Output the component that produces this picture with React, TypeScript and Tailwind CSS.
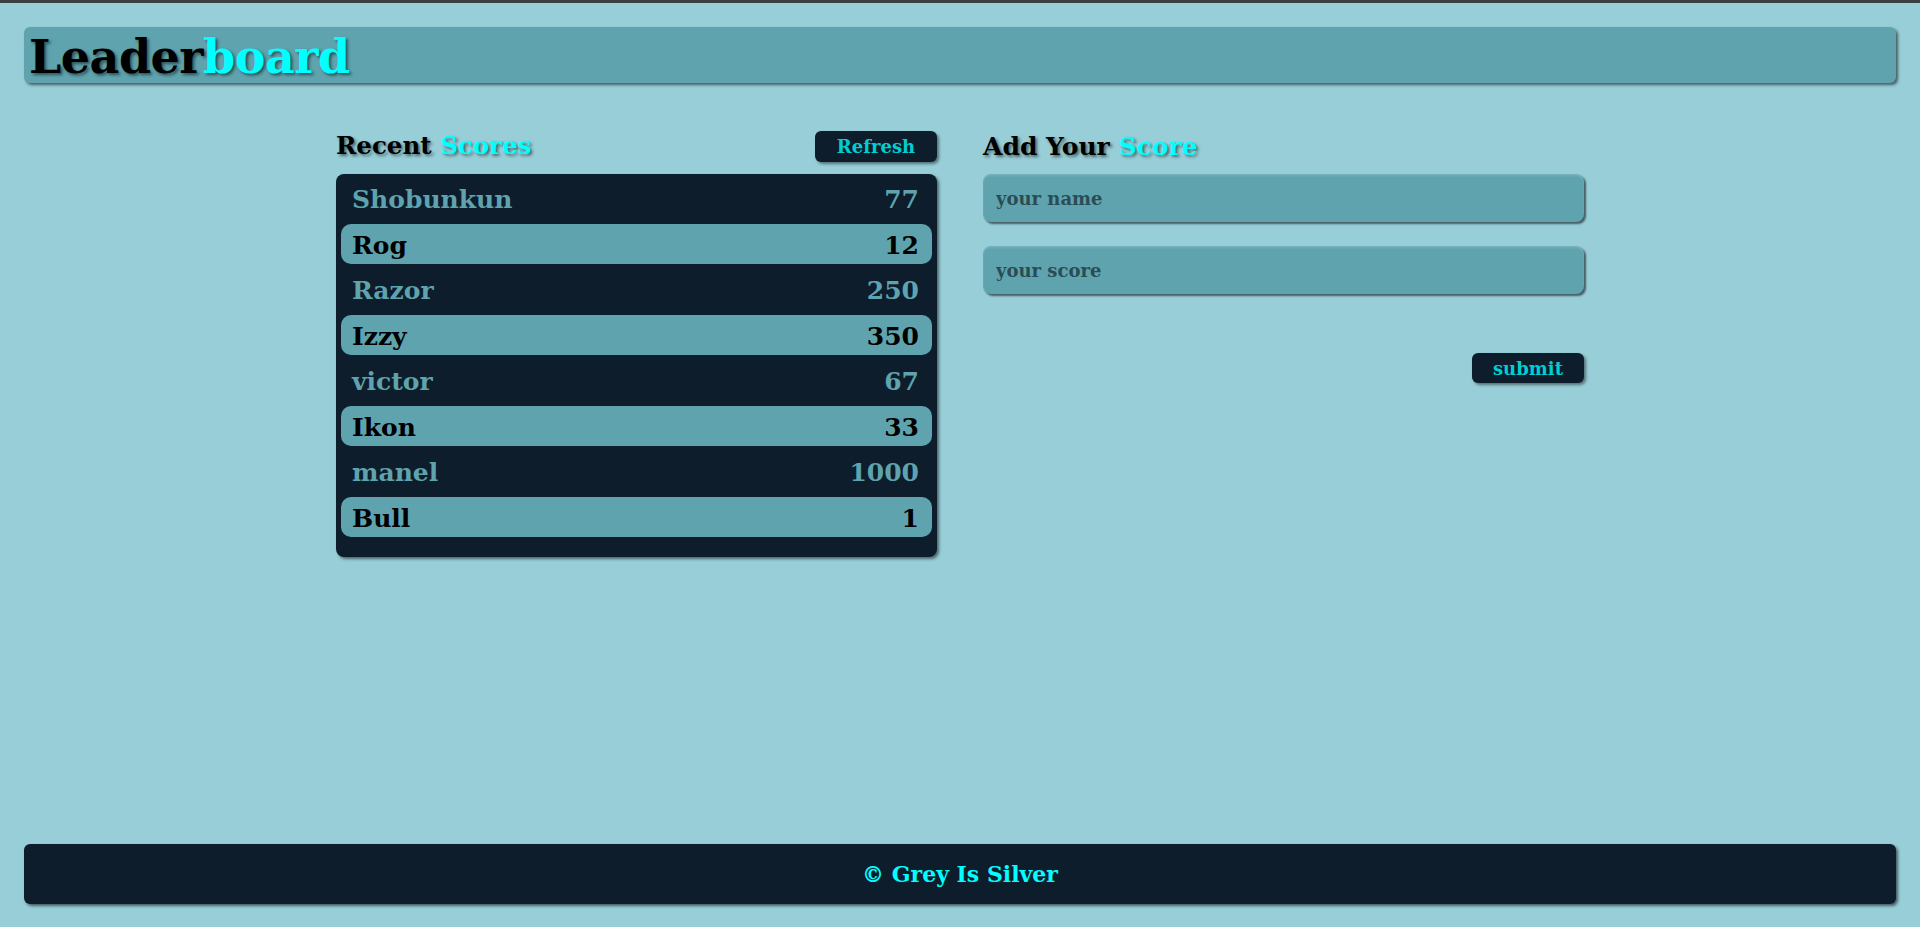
import React from 'react';

const scores = [
  { name: 'Shobunkun', score: 77 },
  { name: 'Rog', score: 12 },
  { name: 'Razor', score: 250 },
  { name: 'Izzy', score: 350 },
  { name: 'victor', score: 67 },
  { name: 'Ikon', score: 33 },
  { name: 'manel', score: 1000 },
  { name: 'Bull', score: 1 },
];

const serif = "font-['Georgia','DejaVu_Serif',serif]";

export default function App() {
  return (
    <div className={`min-h-screen flex flex-col bg-[#97ced8] border-t-[3px] border-[#3c3f41] ${serif}`}>
      <header className="mx-6 mt-6 h-14 flex items-center pt-1 px-[5px] rounded-md bg-[#5ea3ae] shadow-[2px_2px_3px_rgba(0,0,0,0.55)]">
        <h1 className="text-[46px] font-bold leading-none tracking-[-0.5px] text-black [text-shadow:2px_2px_3px_rgba(0,0,0,0.5)]">
          Leader<span className="text-[#00ffff]">board</span>
        </h1>
      </header>

      <main className="flex-1">
        <div className="w-[1248px] mx-auto mt-12 grid grid-cols-2 gap-[46px]">
          <section>
            <div className="flex items-center justify-between h-[31px] mb-3">
              <h3 className="text-[24.5px] font-bold text-black [text-shadow:2px_2px_3px_rgba(0,0,0,0.5)]">
                Recent <span className="text-[#00ffff]">Scores</span>
              </h3>
              <button className="w-[122px] h-[31px] rounded-md bg-[#0d1d2c] text-[#00ced1] text-[18px] font-bold shadow-[2px_2px_3px_rgba(0,0,0,0.45)]">
                Refresh
              </button>
            </div>
            <ul className="rounded-lg bg-[#0d1d2c] pt-1 pb-5 px-[5px] flex flex-col gap-[5.5px] shadow-[2px_2px_3px_rgba(0,0,0,0.5)]">
              {scores.map((s, i) => (
                <li
                  key={s.name}
                  className={`h-10 flex items-center justify-between pt-1 pl-[11px] pr-[13px] rounded-[10px] text-[25px] font-bold ${
                    i % 2 === 1 ? 'bg-[#5ea3ae] text-black' : 'text-[#5ea3ae]'
                  }`}
                >
                  <span>{s.name}</span>
                  <span>{s.score}</span>
                </li>
              ))}
            </ul>
          </section>

          <section>
            <div className="flex items-center h-[31px] mb-3">
              <h3 className="text-[25px] font-bold text-black [text-shadow:2px_2px_3px_rgba(0,0,0,0.5)]">
                Add Your <span className="text-[#00ffff]">Score</span>
              </h3>
            </div>
            <form className="flex flex-col" onSubmit={(e) => e.preventDefault()}>
              <input
                placeholder="your name"
                className="h-12 w-full rounded-lg bg-[#5ea3ae] px-[13px] text-[18px] font-bold text-[#2a4d55] placeholder:text-[#2a4d55] outline-none shadow-[inset_0_2px_2px_rgba(255,255,255,0.15),2px_2px_2px_rgba(0,0,0,0.55)]"
              />
              <input
                placeholder="your score"
                className="mt-6 h-12 w-full rounded-lg bg-[#5ea3ae] px-[13px] text-[18px] font-bold text-[#2a4d55] placeholder:text-[#2a4d55] outline-none shadow-[inset_0_2px_2px_rgba(255,255,255,0.15),2px_2px_2px_rgba(0,0,0,0.55)]"
              />
              <div className="flex justify-end mt-[59px]">
                <button className="w-[112px] h-[30px] rounded-md bg-[#0d1d2c] text-[#00ced1] text-[18px] font-bold shadow-[2px_2px_3px_rgba(0,0,0,0.45)]">
                  submit
                </button>
              </div>
            </form>
          </section>
        </div>
      </main>

      <footer className="mx-6 mb-[23px] h-[60px] flex items-center justify-center rounded-md bg-[#0d1d2c] shadow-[2px_2px_3px_rgba(0,0,0,0.55)]">
        <p className="text-[22px] font-bold text-[#00ffff]">© Grey Is Silver</p>
      </footer>
    </div>
  );
}
